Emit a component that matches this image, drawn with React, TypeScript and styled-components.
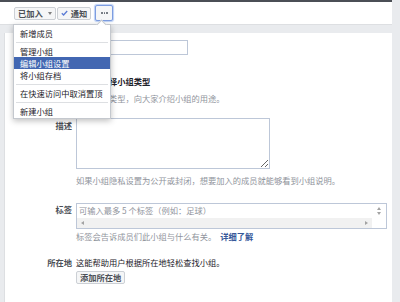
import React from 'react';
import styled, { createGlobalStyle } from 'styled-components';

const GlobalStyle = createGlobalStyle`
  html, body {
    margin: 0;
    padding: 0;
    background: #e9ebee;
  }
  body {
    font-family: 'Noto Sans CJK SC', 'Noto Sans', sans-serif;
    font-size: 8.25px;
    color: #1d2129;
  }
`;

const Page = styled.div`
  width: 392px;
  height: 302px;
  position: relative;
  display: flex;
  flex-direction: column;
`;

const Header = styled.div`
  height: 22px;
  background: #fff;
  border-top: 2px solid #4b4f56;
  border-bottom: 1px solid #dddfe2;
  display: flex;
  align-items: center;
  padding-left: 14px;
  gap: 4px;
`;

const ButtonGroup = styled.div`
  display: flex;
  gap: 1px;
`;

const Button = styled.div`
  height: 11px;
  padding: 0 3px;
  display: flex;
  align-items: center;
  gap: 3px;
  background: #f5f6f7;
  border: 1px solid #ccd0d5;
  border-radius: 2px;
  color: #4b4f56;
  font-weight: bold;
  line-height: 11px;
  white-space: nowrap;
`;

const MoreButton = styled.div`
  width: 16px;
  height: 14px;
  display: flex;
  align-items: center;
  justify-content: center;
  background: #f5f6f7;
  border: 1px solid #7d9de0;
  box-shadow: 0 0 1px 1px #bcd0f5;
  border-radius: 2px;
`;

const Dot = styled.span`
  width: 1.5px;
  height: 1.5px;
  margin: 0 0.5px;
  background: #606770;
  border-radius: 50%;
`;

const Caret = styled.span`
  width: 0;
  height: 0;
  border-left: 2.5px solid transparent;
  border-right: 2.5px solid transparent;
  border-top: 3px solid #7f7f7f;
  margin-left: 2px;
`;

const Card = styled.div`
  flex: 1;
  margin: 8px 0 0 4px;
  background: #fff;
  border-left: 1px solid #dddfe2;
  padding-top: 7px;
  display: flex;
  flex-direction: column;
`;

const Row = styled.div<{ $mt?: number }>`
  display: grid;
  grid-template-columns: 67px 1fr;
  column-gap: 4px;
  margin-top: ${(p) => p.$mt || 0}px;
`;

const Label = styled.div<{ $offset?: number }>`
  text-align: right;
  font-weight: bold;
  color: #4b4f56;
  line-height: 12px;
  padding-top: ${(p) => p.$offset || 0}px;
`;

const Field = styled.div`
  display: flex;
  flex-direction: column;
`;

const TextInput = styled.div`
  width: 110px;
  height: 13px;
  border: 1px solid #bdc7d8;
`;

const Title = styled.div`
  font-weight: bold;
  line-height: 12px;
  margin-bottom: 5px;
`;

const Help = styled.div<{ $top?: number }>`
  color: #90949c;
  line-height: 12px;
  margin-top: ${(p) => p.$top || 0}px;
  white-space: nowrap;
`;

const Plain = styled.div`
  line-height: 12px;
  white-space: nowrap;
`;

const Link = styled.span`
  color: #365899;
  font-weight: bold;
  margin-left: 4px;
`;

const TextArea = styled.textarea`
  width: 190px;
  height: 47px;
  margin: 0;
  padding: 1px;
  border: 1px solid #bdc7d8;
  border-radius: 0;
  font: inherit;
  outline: none;
  resize: both;
`;

const TagBox = styled.div`
  width: 309px;
  height: 24px;
  border: 1px solid #bdc7d8;
  display: grid;
  grid-template-columns: 1fr 14px;
  grid-template-rows: 14px 10px;
`;

const Placeholder = styled.div`
  color: #90949c;
  line-height: 12px;
  padding-left: 2px;
  white-space: nowrap;
`;

const VScroll = styled.div`
  display: flex;
  flex-direction: column;
  align-items: center;
  justify-content: center;
  gap: 2px;
`;

const HScroll = styled.div`
  background: #f1f1f1;
  display: flex;
  align-items: center;
  justify-content: space-between;
  padding: 0 4px;
`;

const Arrow = styled.span<{ $dir: 'up' | 'down' | 'left' | 'right' }>`
  width: 0;
  height: 0;
  ${(p) =>
    p.$dir === 'up'
      ? 'border-left: 2.5px solid transparent; border-right: 2.5px solid transparent; border-bottom: 3px solid #a3a3a3;'
      : p.$dir === 'down'
      ? 'border-left: 2.5px solid transparent; border-right: 2.5px solid transparent; border-top: 3px solid #a3a3a3;'
      : p.$dir === 'left'
      ? 'border-top: 2.5px solid transparent; border-bottom: 2.5px solid transparent; border-right: 3px solid #a3a3a3;'
      : 'border-top: 2.5px solid transparent; border-bottom: 2.5px solid transparent; border-left: 3px solid #a3a3a3;'}
`;

const SmallButton = styled.div`
  align-self: flex-start;
  margin-top: 3px;
  height: 11px;
  padding: 0 3px;
  background: #f5f6f7;
  border: 1px solid #ccd0d5;
  border-radius: 2px;
  color: #4b4f56;
  font-weight: bold;
  line-height: 11px;
`;

const Menu = styled.div`
  position: absolute;
  top: 24px;
  left: 13px;
  width: 96px;
  padding: 2px 0 1px;
  background: #fff;
  border: 1px solid #c4c8ce;
  box-shadow: 0 2px 6px rgba(0, 0, 0, 0.25);
  z-index: 10;
  &::before {
    content: '';
    position: absolute;
    top: -4px;
    left: 84px;
    width: 6px;
    height: 6px;
    background: #fff;
    border-left: 1px solid #c4c8ce;
    border-top: 1px solid #c4c8ce;
    transform: rotate(45deg);
  }
`;

const MenuItem = styled.div<{ $active?: boolean }>`
  position: relative;
  height: 12px;
  line-height: 12px;
  padding: 0 6px;
  white-space: nowrap;
  color: ${(p) => (p.$active ? '#fff' : '#1d2129')};
  background: ${(p) => (p.$active ? '#4267b2' : 'transparent')};
`;

const Separator = styled.div`
  height: 1px;
  background: #dddfe2;
  margin: 2.5px 2px;
`;

const CheckIcon = () => (
  <svg width="7" height="6" viewBox="0 0 7 6">
    <path d="M0.8 3.2 L2.6 5 L6.2 1" fill="none" stroke="#5b7bd5" strokeWidth="1.3" />
  </svg>
);

const App: React.FC = () => {
  return (
    <Page>
      <GlobalStyle />
      <Header>
        <ButtonGroup>
          <Button>
            已加入
            <Caret />
          </Button>
          <Button>
            <CheckIcon />
            通知
          </Button>
        </ButtonGroup>
        <MoreButton>
          <Dot />
          <Dot />
          <Dot />
        </MoreButton>
      </Header>

      <Menu>
        <MenuItem>新增成员</MenuItem>
        <Separator />
        <MenuItem>管理小组</MenuItem>
        <MenuItem $active>编辑小组设置</MenuItem>
        <MenuItem>将小组存档</MenuItem>
        <Separator />
        <MenuItem>在快速访问中取消置顶</MenuItem>
        <Separator />
        <MenuItem>新建小组</MenuItem>
      </Menu>

      <Card>
        <Row>
          <Label />
          <TextInput />
        </Row>
        <Row $mt={20}>
          <Label />
          <Field>
            <Title>为小组选择小组类型</Title>
            <Help>选择小组类型，向大家介绍小组的用途。</Help>
          </Field>
        </Row>
        <Row $mt={14}>
          <Label $offset={1}>描述</Label>
          <Field>
            <TextArea readOnly />
            <Help $top={5}>如果小组隐私设置为公开或封闭，想要加入的成员就能够看到小组说明。</Help>
          </Field>
        </Row>
        <Row $mt={17}>
          <Label>标签</Label>
          <Field>
            <TagBox>
              <Placeholder>可输入最多 5 个标签（例如：足球）</Placeholder>
              <VScroll>
                <Arrow $dir="up" />
                <Arrow $dir="down" />
              </VScroll>
              <HScroll>
                <Arrow $dir="left" />
                <Arrow $dir="right" />
              </HScroll>
              <div />
            </TagBox>
            <Help $top={1}>
              标签会告诉成员们此小组与什么有关。
              <Link>详细了解</Link>
            </Help>
          </Field>
        </Row>
        <Row $mt={14}>
          <Label>所在地</Label>
          <Field>
            <Plain>这能帮助用户根据所在地轻松查找小组。</Plain>
            <SmallButton>添加所在地</SmallButton>
          </Field>
        </Row>
      </Card>
    </Page>
  );
};

export default App;
